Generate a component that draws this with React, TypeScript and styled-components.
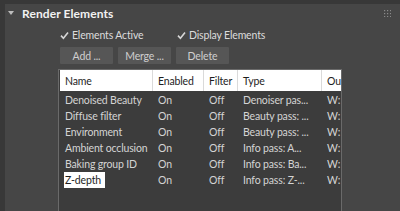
import styled, { createGlobalStyle } from "styled-components"

const GlobalStyle = createGlobalStyle`
  html, body {
    margin: 0;
    padding: 0;
    background: #383838;
    overflow: hidden;
  }
  * { box-sizing: border-box; }
`

type Row = { name: string; enabled: string; filter: string; type: string; output: string }

const rows: Row[] = [
  { name: "Denoised Beauty", enabled: "On", filter: "Off", type: "Denoiser pas...", output: "W:" },
  { name: "Diffuse filter", enabled: "On", filter: "Off", type: "Beauty pass: ...", output: "W:" },
  { name: "Environment", enabled: "On", filter: "Off", type: "Beauty pass: ...", output: "W:" },
  { name: "Ambient occlusion", enabled: "On", filter: "Off", type: "Info pass: A...", output: "W:" },
  { name: "Baking group ID", enabled: "On", filter: "Off", type: "Info pass: Ba...", output: "W:" },
  { name: "Z-depth", enabled: "On", filter: "Off", type: "Info pass: Z-...", output: "W:" },
]

const COLS = "93px 51px 34px 84px 1fr"

const Check = () => (
  <svg width="9" height="9" viewBox="0 0 9 9">
    <path d="M1 4.6 L3.4 7.2 L8 1.4" stroke="#d6d6d6" strokeWidth="1.6" fill="none" />
  </svg>
)

const Grip = () => (
  <svg width="7" height="7" viewBox="0 0 7 7">
    {[0, 3, 6].map((x) =>
      [0, 3, 6].map((y) => <rect key={`${x}-${y}`} x={x} y={y} width="1.2" height="1.2" fill="#8a8a8a" />)
    )}
  </svg>
)

export default function App() {
  return (
    <>
      <GlobalStyle />
      <Frame>
        <Panel>
          <Header>
            <Arrow />
            <Title>Render Elements</Title>
            <GripSlot>
              <Grip />
            </GripSlot>
          </Header>
          <Body>
            <CheckRow>
              <CheckItem $width={117}>
                <Check />
                <span>Elements Active</span>
              </CheckItem>
              <CheckItem>
                <Check />
                <span>Display Elements</span>
              </CheckItem>
            </CheckRow>
            <ButtonRow>
              <Button>Add ...</Button>
              <Button>Merge ...</Button>
              <Button>Delete</Button>
            </ButtonRow>
            <Table>
              <HeadRow>
                <HeadCell>Name</HeadCell>
                <HeadCell>Enabled</HeadCell>
                <HeadCell>Filter</HeadCell>
                <HeadCell>Type</HeadCell>
                <HeadCell $last>Ou</HeadCell>
              </HeadRow>
              {rows.map((r, i) => (
                <BodyRow key={r.name}>
                  <Cell>
                    <NameText $selected={i === rows.length - 1}>{r.name}</NameText>
                  </Cell>
                  <Cell>{r.enabled}</Cell>
                  <Cell>{r.filter}</Cell>
                  <Cell>{r.type}</Cell>
                  <Cell>{r.output}</Cell>
                </BodyRow>
              ))}
            </Table>
          </Body>
        </Panel>
      </Frame>
    </>
  )
}

const Frame = styled.div`
  width: 400px;
  height: 211px;
  padding: 4px 0 0 5px;
  font-family: Lato, "Open Sans", sans-serif;
  letter-spacing: -0.15px;
`

const Panel = styled.div`
  height: 207px;
  background: #464646;
  overflow: hidden;
`

const Header = styled.div`
  height: 18px;
  display: flex;
  align-items: center;
  padding-left: 3px;
`

const Arrow = styled.div`
  width: 0;
  height: 0;
  border-left: 3px solid transparent;
  border-right: 3px solid transparent;
  border-top: 4px solid #bdbdbd;
  margin-right: 8px;
`

const Title = styled.div`
  color: #f2f2f2;
  font-weight: bold;
  font-size: 12px;
  letter-spacing: 0.1px;
`

const GripSlot = styled.div`
  margin-left: auto;
  margin-right: 9px;
  display: flex;
`

const Body = styled.div`
  padding: 6px 0 0 53px;
`

const CheckRow = styled.div`
  display: flex;
  height: 14px;
  align-items: center;
  padding-left: 2px;
`

const CheckItem = styled.div<{ $width?: number }>`
  display: flex;
  align-items: center;
  gap: 3px;
  width: ${(p) => (p.$width ? `${p.$width}px` : "auto")};
  color: #dcdcdc;
  font-size: 10.5px;
`

const ButtonRow = styled.div`
  display: flex;
  gap: 5px;
  margin-top: 5px;
  padding-left: 2px;
`

const Button = styled.div`
  width: 53px;
  height: 17px;
  background: #565656;
  border-radius: 1px;
  color: #cfcfcf;
  font-size: 10.5px;
  display: flex;
  align-items: center;
  justify-content: center;
`

const Table = styled.div`
  margin-top: 5px;
  width: 284px;
  height: 150px;
  border: 1px solid #6a6a6a;
  border-bottom: none;
  background: #3c3c3c;
  padding-left: 1px;
`

const HeadRow = styled.div`
  display: grid;
  grid-template-columns: ${COLS};
  height: 21px;
  background: #ffffff;
  margin-bottom: 1px;
`

const HeadCell = styled.div<{ $last?: boolean }>`
  color: #1e1e1e;
  font-size: 10.5px;
  display: flex;
  align-items: center;
  padding-left: 5px;
  border-right: ${(p) => (p.$last ? "none" : "1px solid #dadada")};
  overflow: hidden;
  white-space: nowrap;
`

const BodyRow = styled.div`
  display: grid;
  grid-template-columns: ${COLS};
  height: 16px;
`

const Cell = styled.div`
  color: #d4d4d4;
  font-size: 10.5px;
  display: flex;
  align-items: center;
  padding-left: 5px;
  overflow: hidden;
  white-space: nowrap;
`

const NameText = styled.span<{ $selected?: boolean }>`
  background: ${(p) => (p.$selected ? "#ffffff" : "transparent")};
  color: ${(p) => (p.$selected ? "#1e1e1e" : "inherit")};
  margin-left: ${(p) => (p.$selected ? "-1px" : "0")};
  padding: ${(p) => (p.$selected ? "2px 4px 2px 1px" : "0")};
`
